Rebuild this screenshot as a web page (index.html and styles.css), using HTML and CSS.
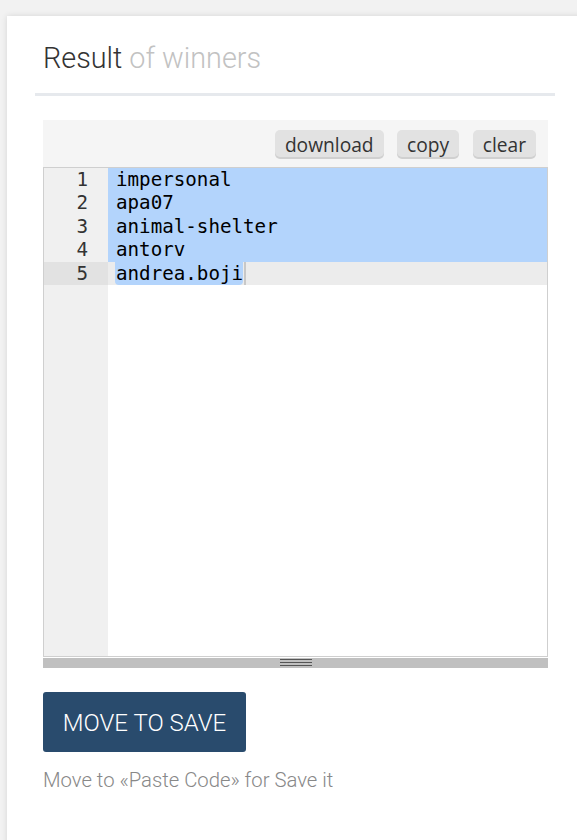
FILE: index.html
```html
<!DOCTYPE html>
<html>
<head>
<meta charset="utf-8">
<link rel="stylesheet" href="styles.css">
</head>
<body>
<div class="card">
  <h2 class="title">Result <span class="sub">of winners</span></h2>
  <div class="rule"></div>
  <div class="panel">
    <div class="toolbar">
      <button class="tbtn">download</button>
      <button class="tbtn">copy</button>
      <button class="tbtn">clear</button>
    </div>
    <div class="editor">
      <div class="gutter">
        <div class="ln">1</div>
        <div class="ln">2</div>
        <div class="ln">3</div>
        <div class="ln">4</div>
        <div class="ln active">5</div>
      </div>
      <div class="code">
        <div class="line sel">impersonal</div>
        <div class="line sel">apa07</div>
        <div class="line sel">animal-shelter</div>
        <div class="line sel">antorv</div>
        <div class="line active"><span class="selpart">andrea.boji</span><span class="cursor"></span></div>
      </div>
    </div>
    <div class="resizer"><span class="grip"></span></div>
    <button class="move">MOVE TO SAVE</button>
    <p class="hint">Move to «Paste Code» for Save it</p>
  </div>
</div>
</body>
</html>
```
FILE: styles.css
```css
html, body {
  margin: 0;
  padding: 0;
  background: #f2f2f2;
  height: 100%;
  overflow: hidden;
}
body {
  padding-top: 16px;
  padding-left: 7px;
  box-sizing: border-box;
}
.card {
  width: 580px;
  min-height: 840px;
  background: #fff;
  box-shadow: 0 0 6px rgba(0,0,0,0.12);
  padding: 0 0 0 28px;
  box-sizing: border-box;
}
.title {
  margin: 0;
  padding: 21px 0 0 8px;
  height: 77px;
  box-sizing: border-box;
  font-family: Roboto, sans-serif;
  font-weight: 300;
  font-size: 28.8px;
  line-height: 42px;
  color: #333;
}
.sub {
  color: #c2c2c2;
}
.rule {
  width: 520px;
  height: 3px;
  background: #e6e9ed;
}
.panel {
  padding: 24px 0 0 8px;
  width: 505px;
}
.toolbar {
  height: 47px;
  background: #f5f5f5;
  display: flex;
  justify-content: flex-end;
  align-items: flex-start;
  gap: 13.5px;
  padding: 10px 12px 0 0;
  box-sizing: border-box;
}
.tbtn {
  font-family: "Open Sans", sans-serif;
  font-size: 19.2px;
  color: #333;
  background: #e2e2e2;
  border: none;
  border-radius: 5px;
  box-shadow: 0 2px 0 #d0d0d0;
  height: 27px;
  padding: 1px 10px 0;
  line-height: 27px;
}
.editor {
  height: 490px;
  border: 1px solid #cfcfcf;
  display: flex;
  box-sizing: border-box;
  font-family: "DejaVu Sans Mono", monospace;
  font-size: 19.2px;
  line-height: 23.4px;
  color: #000;
}
.gutter {
  width: 64px;
  background: #f0f0f0;
  flex: none;
}
.ln {
  text-align: right;
  padding-right: 20px;
  color: #333;
}
.ln.active {
  background: #e2e2e2;
}
.code {
  flex: 1;
}
.line {
  padding-left: 8px;
  white-space: pre;
}
.line.sel {
  background: #b3d4fc;
}
.line.active {
  background: #ececec;
  display: flex;
  align-items: stretch;
}
.selpart {
  background: #b3d4fc;
  border-radius: 0 0 4px 4px;
  margin-left: -1px;
  padding-left: 1px;
}
.cursor {
  width: 2px;
  margin-left: 1px;
  background: #c8c8c8;
}
.resizer {
  height: 10px;
  margin-top: 1px;
  background: #c0c0c0;
  display: flex;
  justify-content: center;
}
.grip {
  width: 32px;
  height: 7px;
  border-top: 1px solid #555;
  border-bottom: 1px solid #555;
  position: relative;
  box-sizing: border-box;
  margin-top: 1px;
}
.grip::after {
  content: "";
  position: absolute;
  left: 0;
  right: 0;
  top: 2px;
  height: 1px;
  background: #555;
}
.move {
  margin-top: 24px;
  display: block;
  width: 203px;
  height: 60px;
  background: #294b6d;
  color: #fff;
  border: none;
  border-radius: 3px;
  font-family: Roboto, sans-serif;
  font-weight: 300;
  font-size: 24px;
  padding: 2px 0 0;
}
.hint {
  margin: 16px 0 0 0;
  font-family: Roboto, sans-serif;
  font-weight: 300;
  font-size: 20.3px;
  color: #888;
}
```
